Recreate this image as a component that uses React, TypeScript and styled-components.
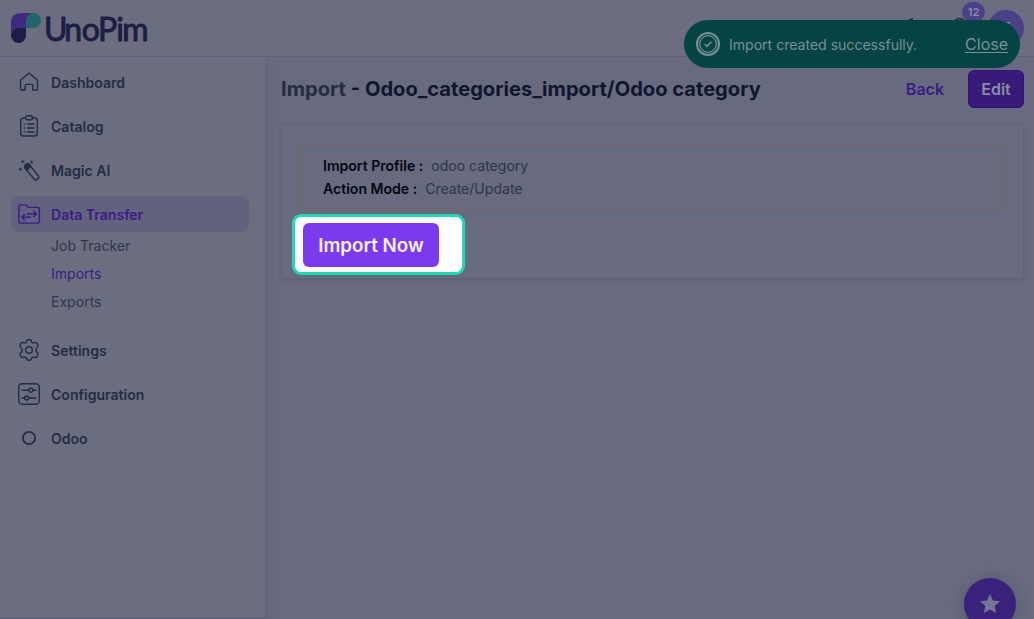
import React from 'react';
import styled, { createGlobalStyle } from 'styled-components';

const ink = '#252c43';
const violet = '#3b1c86';

const GlobalStyle = createGlobalStyle`
  * { box-sizing: border-box; }
  html, body { margin: 0; padding: 0; }
  body {
    width: 1034px;
    height: 619px;
    overflow: hidden;
    background: #686b7f;
    font-family: Inter, "Liberation Sans", sans-serif;
    color: ${ink};
  }
  button { font-family: inherit; }
`;

const Page = styled.div`
  position: relative;
  display: flex;
  flex-direction: column;
  width: 1034px;
  height: 619px;
  overflow: hidden;
`;

const Header = styled.header`
  display: flex;
  align-items: center;
  justify-content: space-between;
  flex: none;
  height: 57px;
  padding: 0 10px 0 11px;
  background: #6b6e80;
  border-bottom: 1px solid #5f6276;
`;

const HeaderTools = styled.div`
  display: flex;
  align-items: center;
  gap: 24px;
`;

const Bell = styled.div`
  position: relative;
  display: flex;
`;

const Count = styled.span`
  position: absolute;
  left: 15px;
  top: -14px;
  width: 23px;
  height: 20px;
  border-radius: 10px;
  background: #4c4189;
  color: #8d8aab;
  font-size: 11px;
  font-weight: 600;
  line-height: 20px;
  text-align: center;
`;

const Avatar = styled.div`
  flex: none;
  width: 36px;
  height: 36px;
  margin-left: -7px;
  border-radius: 50%;
  background: #4c4189;
  color: #8d8aab;
  font-size: 15px;
  font-weight: 600;
  line-height: 36px;
  text-align: center;
`;

const Body = styled.div`
  display: flex;
  flex: 1;
  min-height: 0;
`;

const Sidebar = styled.aside`
  flex: none;
  width: 265px;
  padding: 7px 16px 0 11px;
  background: #6b6e80;
  box-shadow: 0 8px 9px 0 rgba(38, 41, 70, 0.25);
  border-bottom: 2px solid #626579;
`;

const NavItem = styled.a<{ $active?: boolean }>`
  display: flex;
  align-items: center;
  gap: 10px;
  height: 36px;
  margin-bottom: 8px;
  padding-left: 6px;
  border-radius: 8px;
  background: ${p => (p.$active ? '#62617e' : 'transparent')};
  color: ${p => (p.$active ? violet : ink)};
  font-size: 14.05px;
  font-weight: 600;

  svg { flex: none; margin-bottom: 1px; }
`;

const SubNav = styled.div`
  display: flex;
  flex-direction: column;
  margin: -8px 0 16px;
  padding-left: 40px;
`;

const SubItem = styled.a<{ $active?: boolean }>`
  height: 28px;
  line-height: 28px;
  font-size: 14.05px;
  color: ${p => (p.$active ? violet : '#30364c')};
`;

const Main = styled.main`
  flex: 1;
  padding: 13px 10px 0 16px;
`;

const TitleBar = styled.div`
  display: flex;
  align-items: center;
  height: 38px;
`;

const Title = styled.h1`
  flex: 1;
  margin: 0;
  font-size: 20.12px;
  font-weight: 700;
  white-space: nowrap;
  color: #10162e;

  span { color: ${ink}; }
`;

const BackLink = styled.a`
  margin-right: 24px;
  font-size: 16px;
  font-weight: 600;
  color: ${violet};
`;

const EditButton = styled.button`
  width: 56px;
  height: 38px;
  padding: 0;
  border: 1px solid #321178;
  border-radius: 6px;
  background: #371b79;
  color: #8c8aa9;
  font-size: 16px;
  font-weight: 600;
`;

const Card = styled.section`
  height: 156px;
  margin-top: 15px;
  padding: 20px;
  border: 1px solid #606377;
  box-shadow: 0 3px 4px -1px rgba(38, 41, 70, 0.15);
`;

const Profile = styled.dl`
  height: 66px;
  margin: 0;
  padding: 9px 20px;
  border: 1px solid #75665f;
  border-radius: 2px;
`;

const Field = styled.div`
  display: flex;
  gap: 8px;
  height: 23px;
  align-items: center;
  font-size: 14.05px;

  dt { font-weight: 600; color: #04060f; }
  dd { margin: 0; color: #2e344a; }
`;

const Spotlight = styled.div`
  width: 173px;
  height: 61px;
  margin: 4px 0 0 -10px;
  padding: 6px 8px;
  border: 3px solid #22d9b4;
  border-radius: 9px;
  background: #fdfcff;
`;

const ImportButton = styled.button`
  display: block;
  width: 136px;
  height: 44px;
  padding: 0;
  border: 0;
  border-radius: 6px;
  background: #7c3aed;
  color: #f6f0ff;
  font-size: 18.8px;
  font-weight: 600;
`;

const Toast = styled.div`
  position: absolute;
  left: 684px;
  top: 20px;
  display: flex;
  align-items: center;
  width: 336px;
  height: 48px;
  padding: 0 12px;
  border-radius: 24px;
  background: #044444;
  color: #7b9095;
  font-size: 14.05px;

  p { flex: 1; margin: 1px 0 0 9px; }
  a { font-size: 16px; text-decoration: underline; text-underline-offset: 2px; }
`;

const StarButton = styled.div`
  position: absolute;
  left: 964px;
  top: 578px;
  display: flex;
  align-items: center;
  justify-content: center;
  width: 52px;
  height: 52px;
  border-radius: 50%;
  background: #39217c;
  box-shadow: 0 2px 14px rgba(38, 41, 70, 0.3);
`;

const Icon = ({ children }: { children: React.ReactNode }) => (
  <svg width="24" height="24" viewBox="0 0 24 24" fill="none" stroke="currentColor" strokeWidth="1.4" strokeLinecap="round" strokeLinejoin="round">
    {children}
  </svg>
);

const Logo = () => (
  <svg width="150" height="46" viewBox="0 -6 150 46">
    <path d="M0 22V12Q0 2 10 2h13L15 17 8 17Q0 17 0 25Z" fill="#3e2b80" />
    <path d="M0 24.5A7.5 7.5 0 0 1 7.5 17H15v7.5a7.5 7.5 0 0 1-15 0Z" fill="#1e1d43" />
    <path d="M15 17V9.500A7.500 7.500 0 1 1 22.500 17Z" fill="#24646e" />
    <text x="33 53.300 70.700 87 105.300 111.300" y="29.500" fontFamily="Lato, sans-serif" fontSize="32" fontWeight="400" fill="#1e1d43" stroke="#1e1d43" strokeWidth="0.900" strokeLinejoin="round">UnoPim</text>
  </svg>
);

const icons = {
  home: <path d="M3.500 10.200 12 3l8.500 7.200V19a1 1 0 0 1-1 1h-3.700v-4.600a1 1 0 0 0-1-1H9.200a1 1 0 0 0-1 1V20H4.500a1 1 0 0 1-1-1Z" />,
  catalog: (
    <>
      <path d="M8.500 4H6.200a2.500 2.500 0 0 0-2.500 2.500v13A2.500 2.500 0 0 0 6.200 22h11.600a2.500 2.500 0 0 0 2.500-2.500v-13A2.500 2.500 0 0 0 17.800 4h-2.300" />
      <rect x="8.700" y="1.800" width="6.600" height="4" rx="1.800" />
      <path d="M7.300 10h.1M10.500 10h6.500M7.300 14h.1M10.500 14h6.500M7.300 18h.1M10.500 18h6.500" />
    </>
  ),
  magic: (
    <>
      <path d="m8.400 10.600 9.300 11.100q.8.900 1.700.1l2.200-1.900q.9-.8.100-1.700L12.700 7.200" />
      <path d="M8.300 10.700Q6.800 9.300 7.800 7.500T10.300 5.800q1.400-.3 2.200.8l1.300 1.900-4 3.600Z" fill="currentColor" />
      <path d="M5.700 2.300v2.400M4.500 3.500h2.400M14.700 3v2.200M13.600 4.100h2.200M3.300 10v2.200M2.200 11.100h2.200" strokeWidth="1.100" />
    </>
  ),
  transfer: (
    <>
      <path d="M1.900 4.200a1.300 1.300 0 0 1 1.300-1.300h5.500q.7 0 1.100.6l1.300 1.900h10a1.300 1.300 0 0 1 1.300 1.300v13.100a1.300 1.300 0 0 1-1.300 1.300H3.200a1.300 1.300 0 0 1-1.300-1.300Z" />
      <path d="M10.500 12h9m-2.800-2.800 2.800 2.800-2.800 2.800M13.500 15.200H4.800m2.800-2.800-2.800 2.800L7.600 18" />
    </>
  ),
  gear: (
    <>
      <path d="M9.500 3.300q.2-1.500 1.600-1.500h1.800q1.400 0 1.600 1.500.2 1.800 1.900 1.600l1.700-.4q1.200-.2 1.900.9l.8 1.400q.7 1.200-.3 2.200-1.600 1.300-1.600 3t1.600 3q1 1 .3 2.200l-.8 1.400q-.7 1.100-1.900.9l-1.700-.4q-1.700-.2-1.900 1.600-.2 1.500-1.600 1.500h-1.800q-1.400 0-1.600-1.500-.2-1.800-1.900-1.600l-1.700.4q-1.200.2-1.900-.9l-.8-1.400q-.7-1.200.3-2.200 1.600-1.300 1.600-3t-1.600-3q-1-1-.3-2.200L4 5.400q.7-1.100 1.900-.9l1.700.4q1.700.2 1.900-1.600Z" />
      <circle cx="12" cy="12" r="3.300" />
    </>
  ),
  sliders: (
    <>
      <rect x="1.700" y="1.700" width="20.600" height="20.600" rx="3.500" />
      <path d="M5 8.200h6.500M16 8.200h3M5 16h2.500M12 16h7" />
      <circle cx="13.800" cy="8.200" r="2" />
      <circle cx="9.700" cy="16" r="2" />
    </>
  ),
  ring: <circle cx="12" cy="12" r="6.100" strokeWidth="1.800" />,
};

const Item = ({ icon, label, active }: { icon: keyof typeof icons; label: string; active?: boolean }) => (
  <NavItem $active={active}>
    <Icon>{icons[icon]}</Icon>
    <span>{label}</span>
  </NavItem>
);

export default function App() {
  return (
    <Page>
      <GlobalStyle />
      <Header>
        <Logo />
        <HeaderTools>
          <Icon><path d="M13.500 2.600A11 11 0 0 0 5 12a8.500 8.500 0 0 0 16 3A8 8 0 0 1 13.500 2.600Z" fill="currentColor" /></Icon>
          <Bell>
            <Icon><path d="M6 18V9a6 6 0 0 1 13 0V18ZM10 21h4" /></Icon>
            <Count>12</Count>
          </Bell>
          <Avatar>E</Avatar>
        </HeaderTools>
      </Header>
      <Body>
        <Sidebar>
          <Item icon="home" label="Dashboard" />
          <Item icon="catalog" label="Catalog" />
          <Item icon="magic" label="Magic AI" />
          <Item icon="transfer" label="Data Transfer" active />
          <SubNav>
            <SubItem>Job Tracker</SubItem>
            <SubItem $active>Imports</SubItem>
            <SubItem>Exports</SubItem>
          </SubNav>
          <Item icon="gear" label="Settings" />
          <Item icon="sliders" label="Configuration" />
          <Item icon="ring" label="Odoo" />
        </Sidebar>
        <Main>
          <TitleBar>
            <Title><span>Import</span> - Odoo_categories_import/Odoo category</Title>
            <BackLink>Back</BackLink>
            <EditButton>Edit</EditButton>
          </TitleBar>
          <Card>
            <Profile>
              <Field><dt>Import Profile :</dt><dd>odoo category</dd></Field>
              <Field><dt>Action Mode :</dt><dd>Create/Update</dd></Field>
            </Profile>
            <Spotlight><ImportButton>Import Now</ImportButton></Spotlight>
          </Card>
        </Main>
      </Body>
      <Toast>
        <svg width="24" height="24" viewBox="0 0 24 24" fill="none" stroke="currentColor">
          <circle cx="12" cy="12" r="11" strokeWidth="2" />
          <circle cx="12" cy="12" r="8.300" strokeWidth="1.200" />
          <path d="m8.700 12.200 2.200 2.200 4.400-4.500" strokeWidth="1.600" />
        </svg>
        <p>Import created successfully.</p>
        <a>Close</a>
      </Toast>
      <StarButton>
        <svg width="22" height="22" viewBox="0 0 22 22" fill="#747495">
          <path d="m11 1 2.900 6.500 7.100.8-5.300 4.800 1.500 7L11 16.500 4.800 20.100l1.500-7L1 8.300l7.100-.8Z" />
        </svg>
      </StarButton>
    </Page>
  );
}
